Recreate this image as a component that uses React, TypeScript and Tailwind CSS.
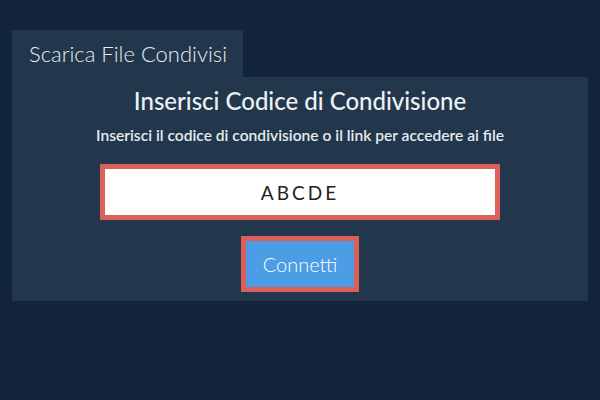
import React from 'react';

export default function App() {
  return (
    <div
      className="w-[600px] h-[400px] bg-[#12243a] pt-[30px] px-[12px]"
      style={{ fontFamily: 'Lato, "Noto Sans", sans-serif' }}
    >
      {/* Tab */}
      <div className="flex">
        <div className="h-[47px] w-[231px] bg-[#22364c] pl-[17px] flex items-center">
          <span className="text-[22px] font-light leading-none text-[#e8ecf0]">Scarica File Condivisi</span>
        </div>
      </div>

      {/* Panel */}
      <div className="bg-[#22364c] h-[224px] pt-[9px] flex flex-col items-center">
        <h2 className="text-[24px] leading-[30px] font-medium text-[#eef1f4]">
          Inserisci Codice di Condivisione
        </h2>
        <p className="mt-[9px] text-[15.6px] leading-[20px] font-semibold text-[#e6eaee]">
          Inserisci il codice di condivisione o il link per accedere ai file
        </p>
        <input
          readOnly
          value="ABCDE"
          className="mt-[19px] w-[400px] h-[56px] border-[5px] border-[#dc5f5a] bg-white text-center text-[19px] tracking-[3px] text-[#222] outline-none"
          style={{ fontFamily: 'Lato, sans-serif' }}
        />
        <button className="mt-[16px] w-[118px] h-[56px] border-[5px] border-[#dc5f5a] bg-[#4c9ce6] text-white text-[20px] font-light">
          Connetti
        </button>
      </div>
    </div>
  );
}
